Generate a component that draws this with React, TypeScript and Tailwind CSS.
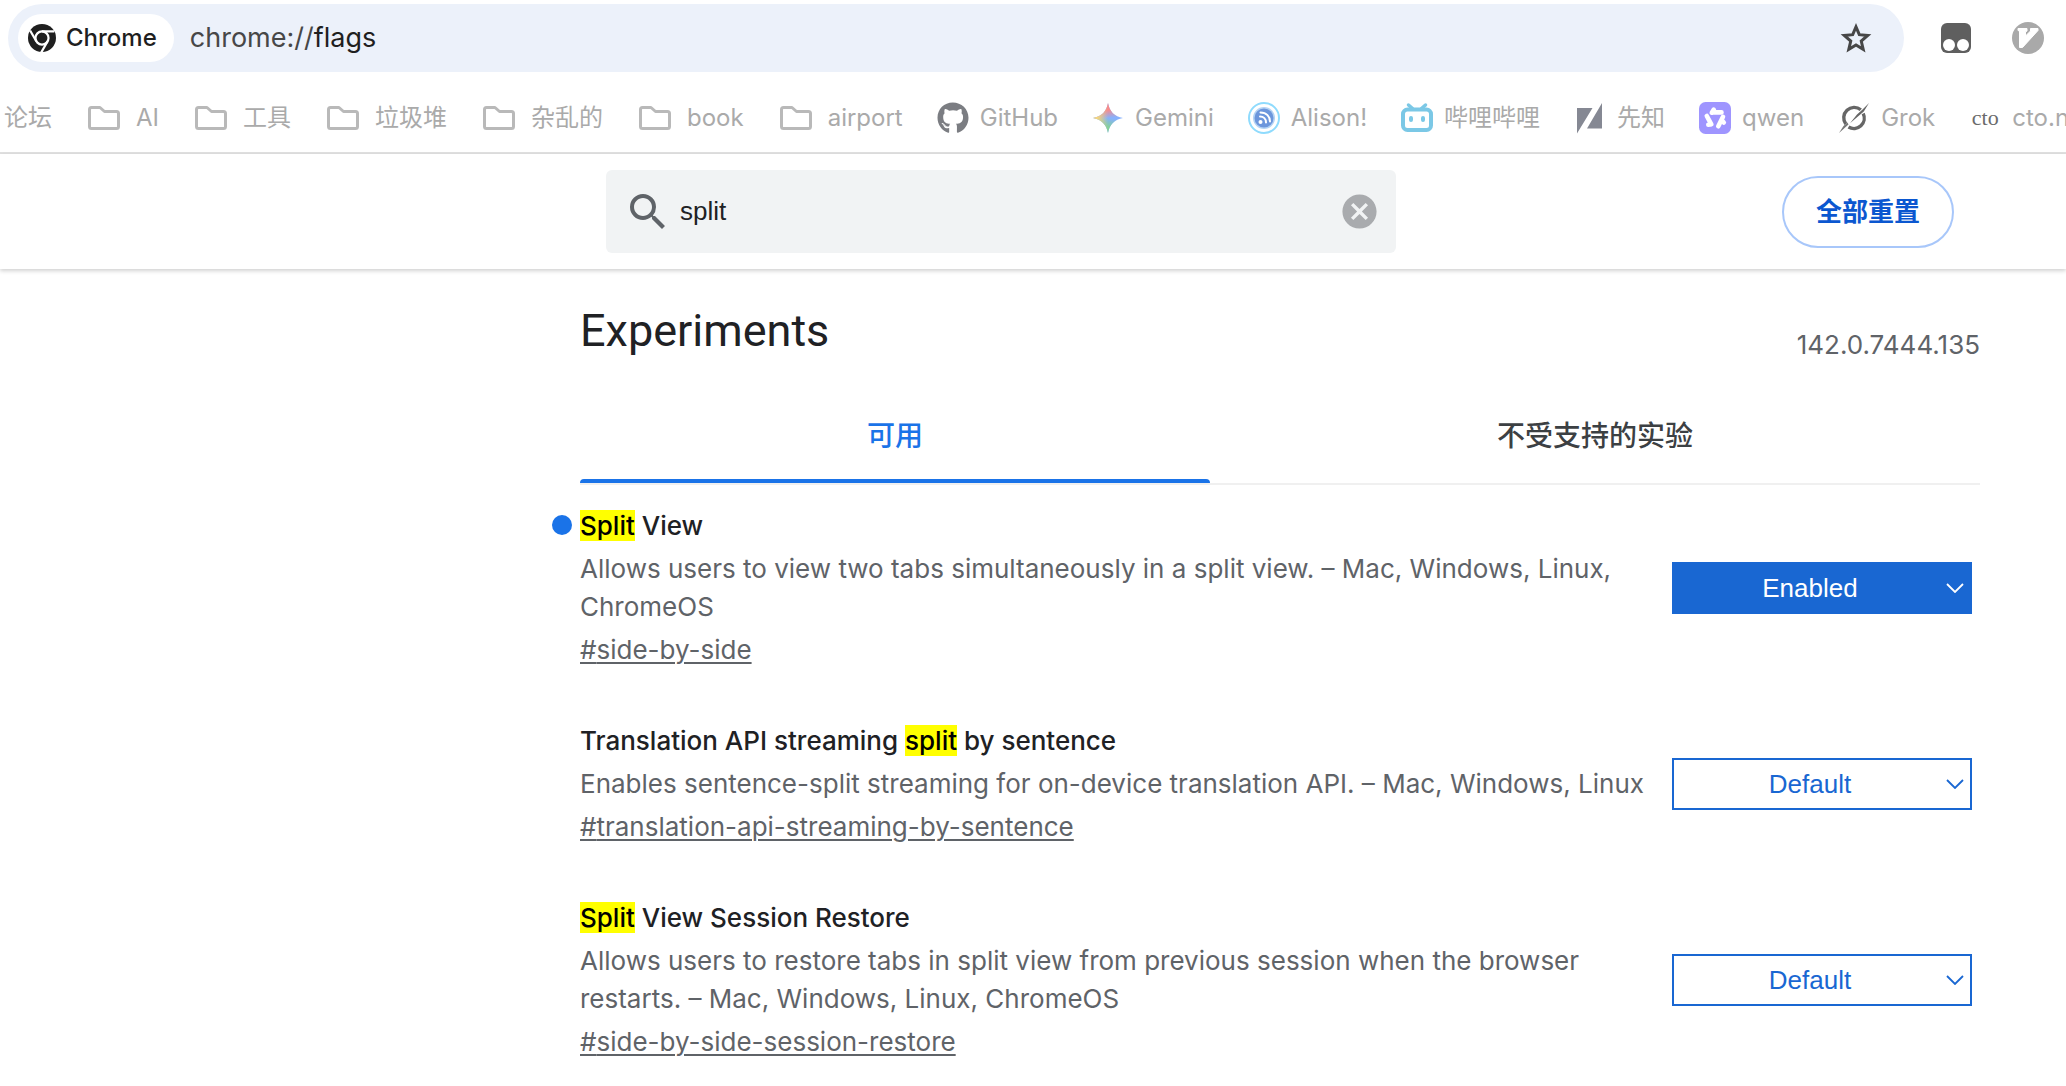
import { useState, type ReactNode } from "react";
import { FaGithub } from "react-icons/fa";
import { MdCancel, MdSearch } from "react-icons/md";

function ChromeLogo() {
  return (
    <svg viewBox="0 0 24 24" className="size-7 shrink-0 fill-[#1f1f1f]" aria-hidden="true">
      <circle cx="12" cy="12" r="12" />
      <g fill="none" stroke="#fff" strokeWidth="1.900">
        <circle cx="12" cy="12" r="5.600" />
        <path d="M12 6.400H22.500M7.150 14.800L1.800 5.530M16.850 14.800L10.850 25.200" />
      </g>
    </svg>
  );
}

function StarIcon() {
  return (
    <svg viewBox="0 0 24 24" className="size-9" fill="none" stroke="#474747" strokeWidth="2" strokeMiterlimit="8" aria-hidden="true">
      <path d="M12 4.600L14.200 9.800L19.800 10.300L15.500 14L16.800 19.500L12 16.600L7.200 19.500L8.500 14L4.200 10.300L9.800 9.800Z" />
    </svg>
  );
}

function FolderIcon() {
  return (
    <svg viewBox="0 0 32 24" className="h-6 w-8 shrink-0" fill="none" stroke="#b9b9b9" strokeWidth="3" strokeLinejoin="round" aria-hidden="true">
      <path d="M3.5 1.5H12L16.5 5.5H28.5Q30.500 5.5 30.500 7.500V20.500Q30.500 22.500 28.500 22.500H3.500Q1.500 22.500 1.500 20.500V3.500Q1.500 1.500 3.500 1.500Z" />
    </svg>
  );
}

function GeminiIcon() {
  const star = "M16 1C17.500 9.500 22.500 14.500 31 16C22.500 17.500 17.500 22.500 16 31C14.500 22.500 9.500 17.500 1 16C9.500 14.500 14.500 9.500 16 1Z";
  return (
    <svg viewBox="0 0 32 32" className="size-8 shrink-0" aria-hidden="true">
      <defs>
        <linearGradient id="gemRed" x1="0.500" y1="0" x2="0.560" y2="0.500">
          <stop offset="0.450" stopColor="#f98a8a" />
          <stop offset="1" stopColor="#f98a8a" stopOpacity="0" />
        </linearGradient>
        <linearGradient id="gemYellow" x1="0" y1="0.500" x2="0.500" y2="0.500">
          <stop offset="0.250" stopColor="#fbd777" />
          <stop offset="1" stopColor="#fbd777" stopOpacity="0" />
        </linearGradient>
        <linearGradient id="gemGreen" x1="0.450" y1="1" x2="0.550" y2="0.500">
          <stop offset="0.400" stopColor="#84d09a" />
          <stop offset="1" stopColor="#84d09a" stopOpacity="0" />
        </linearGradient>
      </defs>
      <path d={star} fill="#86b1fd" />
      <path d={star} fill="url(#gemGreen)" />
      <path d={star} fill="url(#gemRed)" />
      <path d={star} fill="url(#gemYellow)" />
    </svg>
  );
}

function AlisonIcon() {
  return (
    <svg viewBox="0 0 32 32" className="size-8 shrink-0" fill="none" aria-hidden="true">
      <circle cx="16" cy="16" r="15" stroke="#8fdbfd" strokeWidth="2" />
      <circle cx="16" cy="16" r="11" fill="#b4d3f4" />
      <circle cx="16" cy="16" r="9.500" fill="#6c96dc" />
      <circle cx="12.500" cy="20" r="2" fill="#fff" />
      <path d="M12 14.500C15.500 14.500 18 17 18 20.500M12.500 10.500C18.500 10.500 22 14.500 22 19.500" stroke="#fff" strokeWidth="2" strokeLinecap="round" />
    </svg>
  );
}

function BilibiliIcon() {
  return (
    <svg viewBox="0 0 32 32" className="size-8 shrink-0" fill="none" stroke="#7bc8e6" strokeLinecap="round" aria-hidden="true">
      <path d="M7.500 3L11.500 6.500M24.500 3L20.500 6.500" strokeWidth="3.500" />
      <rect x="2" y="7.500" width="28" height="20.500" rx="4.500" strokeWidth="4" />
      <path d="M10 16V18M22 16V18" strokeWidth="4" />
    </svg>
  );
}

function XianzhiIcon() {
  return (
    <svg viewBox="0 0 32 32" className="size-8 shrink-0" fill="#858893" aria-hidden="true">
      <path d="M3 6H18.500L3 31.500ZM28 1V26.500H13Z" />
    </svg>
  );
}

function QwenIcon() {
  return (
    <svg viewBox="0 0 32 32" className="size-8 shrink-0" fill="none" aria-hidden="true">
      <rect width="32" height="32" rx="6.500" fill="#9f95ff" />
      <g stroke="#fff" strokeWidth="4.600" strokeLinecap="round" strokeLinejoin="round">
        <path d="M12.800 10.700L14.800 7.600M13.500 10.400H22.500" />
        <path d="M7.800 14L12.300 22.300M12.300 22.300L9.300 22.700" />
        <path d="M24 14.800L19.300 24.300M22.500 18L24.800 20.600" />
      </g>
      <path d="M11.800 13.600H20.200L16 20.800Z" fill="#9f95ff" />
    </svg>
  );
}

function GrokIcon() {
  return (
    <svg viewBox="0 0 32 32" className="size-8 shrink-0" aria-hidden="true">
      <g fill="none" stroke="#666" strokeWidth="3.400">
        <path d="M22.800 7.800A10.400 10.400 0 0 0 7.800 22" />
        <path d="M25.200 11.500A10.400 10.400 0 0 1 10.500 25" />
      </g>
      <path d="M31 1L25.800 9.500L12 21.300L19 12.500L24 8Z" fill="#666" />
      <path d="M1 31L5.500 24L9.500 20.500L10.500 22.500Z" fill="#777" />
    </svg>
  );
}

function CtoIcon() {
  return (
    <span className="w-8 shrink-0 text-center font-['Liberation_Serif',serif] text-[22px] leading-8 text-[#6b6b6b]" aria-hidden="true">
      cto
    </span>
  );
}

function TampermonkeyIcon() {
  return (
    <svg viewBox="0 0 30 30" className="size-[30px]" aria-hidden="true">
      <rect width="30" height="30" rx="6" fill="#5f5f5f" />
      <circle cx="8" cy="22" r="6" fill="#fff" />
      <circle cx="22" cy="22" r="6" fill="#fff" />
    </svg>
  );
}

function VimiumIcon() {
  return (
    <svg viewBox="0 0 32 32" className="size-8" aria-hidden="true">
      <circle cx="16" cy="16" r="16" fill="#a9a9a9" />
      <path d="M6 6.500H15V9L13.500 10V14L18.500 9V6.500H26V8.500L10.500 25.500H7.500V9L6 8.500Z" fill="#fff" stroke="#fff" strokeWidth="1" strokeLinejoin="round" />
    </svg>
  );
}

const folders = ["AI", "工具", "垃圾堆", "杂乱的", "book", "airport"];

const sites: { label: string; icon: ReactNode }[] = [
  { label: "GitHub", icon: <FaGithub className="size-8 shrink-0 text-[#7b7d82]" aria-hidden="true" /> },
  { label: "Gemini", icon: <GeminiIcon /> },
  { label: "Alison!", icon: <AlisonIcon /> },
  { label: "哔哩哔哩", icon: <BilibiliIcon /> },
  { label: "先知", icon: <XianzhiIcon /> },
  { label: "qwen", icon: <QwenIcon /> },
  { label: "Grok", icon: <GrokIcon /> },
  { label: "cto.new", icon: <CtoIcon /> },
];

type Experiment = { id: string; title: string; description: string; value: string; modified?: boolean };

const experiments: Experiment[] = [
  {
    id: "side-by-side",
    title: "Split View",
    description: "Allows users to view two tabs simultaneously in a split view. – Mac, Windows, Linux, ChromeOS",
    value: "Enabled",
    modified: true,
  },
  {
    id: "translation-api-streaming-by-sentence",
    title: "Translation API streaming split by sentence",
    description: "Enables sentence-split streaming for on-device translation API. – Mac, Windows, Linux",
    value: "Default",
  },
  {
    id: "side-by-side-session-restore",
    title: "Split View Session Restore",
    description:
      "Allows users to restore tabs in split view from previous session when the browser restarts. – Mac, Windows, Linux, ChromeOS",
    value: "Default",
  },
];

function Highlighted({ text }: { text: string }) {
  return (
    <>
      {text.split(/(split)/i).map((part, i) =>
        /^split$/i.test(part) ? (
          <mark key={i} className="bg-[#ffff00] text-black">
            {part}
          </mark>
        ) : (
          part
        ),
      )}
    </>
  );
}

function AddressBar() {
  return (
    <div className="flex items-center pt-1 pr-[22px] pl-2">
      <div className="flex h-[68px] flex-1 items-center rounded-full bg-[#ecf1fa] pr-[30px] pl-[10px]">
        <button className="flex h-12 items-center gap-[10px] rounded-full bg-white pr-[17px] pl-[10px] text-2xl font-medium text-[#1f1f1f]">
          <ChromeLogo />
          Chrome
        </button>
        <p className="ml-4 flex-1 text-[27px] leading-9 text-[#1f1f1f]">
          <span className="text-[#474747]">chrome://</span>flags
        </p>
        <button aria-label="Bookmark this tab">
          <StarIcon />
        </button>
      </div>
      <button className="ml-[37px]" aria-label="Tampermonkey">
        <TampermonkeyIcon />
      </button>
      <button className="ml-[41px]" aria-label="Vimium">
        <VimiumIcon />
      </button>
    </div>
  );
}

function BookmarksBar() {
  return (
    <nav
      aria-label="Bookmarks"
      className="mt-3 flex h-[70px] items-center gap-[34px] overflow-hidden border-b-2 border-[#e0e0e0] pl-1 text-2xl whitespace-nowrap text-[#aaaaaa]"
    >
      <div className="flex shrink-0 items-center gap-9">
        <button>论坛</button>
        {folders.map((name) => (
          <button key={name} className="flex items-center gap-4">
            <FolderIcon />
            {name}
          </button>
        ))}
      </div>
      {sites.map((site) => (
        <a key={site.label} href="#" className="flex shrink-0 items-center gap-[11px]">
          {site.icon}
          {site.label}
        </a>
      ))}
    </nav>
  );
}

function ExperimentRow({ experiment }: { experiment: Experiment }) {
  const [value, setValue] = useState(experiment.value);
  const enabled = value === "Enabled";
  return (
    <li className="relative flex items-center gap-6 pr-2">
      {experiment.modified && <span className="absolute top-2 -left-7 size-5 rounded-full bg-[#1a73e8]" />}
      <div className="flex min-w-0 flex-1 flex-col items-start gap-[5px] text-[26px] leading-[38px] text-[#5f6368]">
        <h3 id={`${experiment.id}-title`} className="font-medium text-[#202124]">
          <Highlighted text={experiment.title} />
        </h3>
        <p>{experiment.description}</p>
        <a href={`#${experiment.id}`} className="underline decoration-2 underline-offset-3">
          #{experiment.id}
        </a>
      </div>
      <div className="relative w-[300px] shrink-0">
        <select
          aria-labelledby={`${experiment.id}-title`}
          value={value}
          onChange={(e) => setValue(e.target.value)}
          className={
            "block h-[52px] w-full appearance-none border-2 border-[#1967d2] pr-6 text-center font-['Liberation_Sans',Arial,sans-serif] text-[26px] " +
            (enabled ? "bg-[#1967d2] text-white" : "bg-white text-[#1967d2]")
          }
        >
          <option>Default</option>
          <option>Enabled</option>
          <option>Disabled</option>
        </select>
        <svg
          viewBox="0 0 18 10"
          className={"pointer-events-none absolute top-[21px] right-2 h-[10px] w-[18px] " + (enabled ? "text-white" : "text-[#1967d2]")}
          fill="none"
          stroke="currentColor"
          strokeWidth="1.800"
          aria-hidden="true"
        >
          <path d="M1 1L9 9L17 1" />
        </svg>
      </div>
    </li>
  );
}

export default function App() {
  const [query, setQuery] = useState("split");
  return (
    <div className="min-h-screen overflow-x-hidden bg-white font-['Inter','Noto_Sans_CJK_SC',sans-serif] text-[#202124]">
      <AddressBar />
      <BookmarksBar />

      <header className="flex items-center justify-between pt-4 pr-28 pb-4 pl-[606px] shadow-[0_2px_4px_rgba(0,0,0,0.18)]">
        <div className="flex h-[83px] w-[790px] items-center rounded-md bg-[#f1f3f4] pr-4 pl-[18px]">
          <MdSearch className="size-12 shrink-0 text-[#5f6368]" aria-hidden="true" />
          <input
            type="text"
            aria-label="搜索实验"
            value={query}
            onChange={(e) => setQuery(e.target.value)}
            className="ml-2 min-w-0 flex-1 bg-transparent font-['Liberation_Sans',Arial,sans-serif] text-[26px] text-[#202124] outline-none"
          />
          <button aria-label="清除搜索" onClick={() => setQuery("")}>
            <MdCancel className="size-[41px] text-[#a9abae]" />
          </button>
        </div>
        <button className="h-[72px] rounded-full border-2 border-[#a8c7fa] px-8 text-[26px] font-bold text-[#0b57d0]">
          全部重置
        </button>
      </header>

      <main className="pt-[34px] pr-[86px] pl-[580px]">
        <div className="flex items-start justify-between">
          <h1 className="font-['Roboto',sans-serif] text-[45px] leading-14">Experiments</h1>
          <span className="mt-6 text-[26px] leading-9 text-[#5f6368]">142.0.7444.135</span>
        </div>

        <div role="tablist" className="mt-[22px] grid grid-cols-[9fr_11fr] border-b-2 border-[#f0f0f0] text-[28px] font-medium">
          <button role="tab" aria-selected="true" className="flex flex-col text-[#1a73e8]">
            <span className="flex h-[94px] w-full items-center justify-center pt-2">可用</span>
            <span className="h-1 w-full rounded-t bg-[#1a73e8]" />
          </button>
          <button role="tab" aria-selected="false" className="flex flex-col text-[#3c4043]">
            <span className="flex h-[94px] w-full items-center justify-center pt-2">不受支持的实验</span>
          </button>
        </div>

        <ul className="mt-[22px] flex flex-col gap-[53px]">
          {experiments.map((experiment) => (
            <ExperimentRow key={experiment.id} experiment={experiment} />
          ))}
        </ul>
      </main>
    </div>
  );
}
